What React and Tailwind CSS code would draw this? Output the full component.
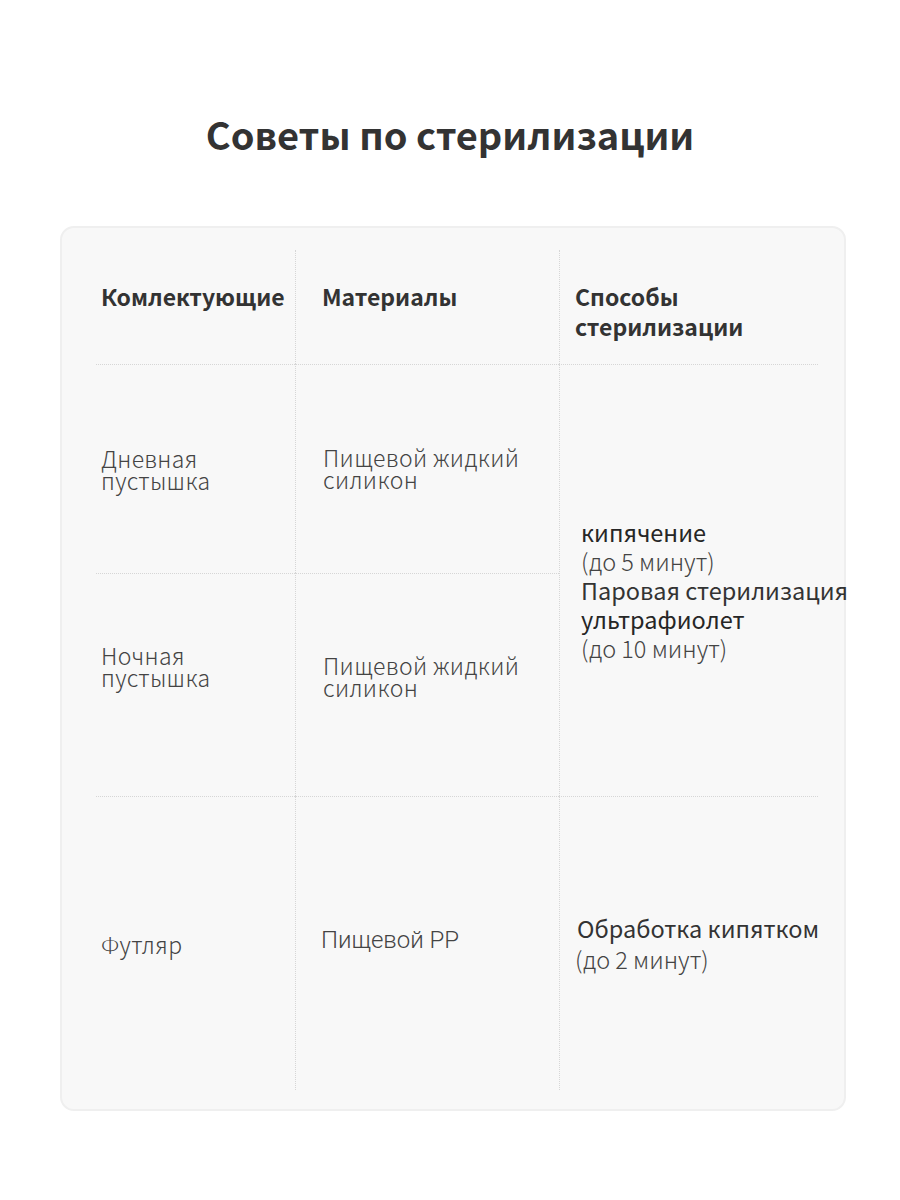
import React from "react";

const font = { fontFamily: '"Noto Sans CJK SC", "Noto Sans", sans-serif' };

const SterilizationTips = () => {
  return (
    <div className="w-[900px] min-h-[1200px] bg-white text-[#333]" style={font}>
      {/* Title */}
      <div className="pt-[106px] text-center">
        <h1 className="text-[38px] font-bold leading-[56px] text-[#333]">Советы по стерилизации</h1>
      </div>

      {/* Card */}
      <div className="mx-[60px] mt-[64px] w-[786px] h-[885px] rounded-[14px] border-2 border-[#efefef] bg-[#f8f8f8] pt-[22px] pl-[34px]">
        <div className="grid grid-cols-[199px_264px_259px] grid-rows-[114px_209px_223px_294px]">
          {/* Header */}
          <div className="pl-[5px] pt-[31px] text-[23px] font-bold leading-[30px] whitespace-nowrap">Комлектующие</div>
          <div className="border-l border-dotted border-[#d6d6d6] pl-[26px] pt-[31px] text-[23px] font-bold leading-[30px]">
            Материалы
          </div>
          <div className="border-l border-dotted border-[#d6d6d6] pl-[15px] pt-[31px] text-[23px] font-bold leading-[30px]">
            Способы
            <br />
            стерилизации
          </div>

          {/* Row 1 */}
          <div className="flex items-center border-t border-dotted border-[#d6d6d6] pl-[5px] text-[23px] font-light leading-[22px] tracking-[0.3px] text-[#444]">
            <span>
              Дневная
              <br />
              пустышка
            </span>
          </div>
          <div className="flex items-center border-l border-t border-dotted border-[#d6d6d6] pl-[27px] pb-[2px] text-[23px] font-light leading-[22px] tracking-[0.4px] text-[#444] whitespace-nowrap">
            <span>
              Пищевой жидкий
              <br />
              силикон
            </span>
          </div>
          <div className="row-span-2 flex items-center border-l border-t border-dotted border-[#d6d6d6] pl-[21px] pt-[20px] text-[23.5px] leading-[29px] whitespace-nowrap">
            <div>
              <div className="font-normal text-[#262626]">кипячение</div>
              <div className="font-light text-[#444]">(до 5 минут)</div>
              <div className="font-normal text-[#333]">Паровая стерилизация</div>
              <div className="font-normal text-[#262626]">ультрафиолет</div>
              <div className="font-light text-[#444]">(до 10 минут)</div>
            </div>
          </div>

          {/* Row 2 */}
          <div className="border-t border-dotted border-[#d6d6d6] pl-[5px] pt-[70px] text-[23px] font-light leading-[22px] tracking-[0.3px] text-[#444]">
            Ночная
            <br />
            пустышка
          </div>
          <div className="border-l border-t border-dotted border-[#d6d6d6] pl-[27px] pt-[80px] text-[23px] font-light leading-[22px] tracking-[0.4px] text-[#444] whitespace-nowrap">
            Пищевой жидкий
            <br />
            силикон
          </div>

          {/* Row 3 */}
          <div className="flex items-center border-t border-dotted border-[#d6d6d6] pl-[5px] text-[23px] font-light leading-[22px] tracking-[0.3px] text-[#444]">
            Футляр
          </div>
          <div
            className="flex items-center border-l border-t border-dotted border-[#d6d6d6] pl-[25px] pb-[8px] text-[24px] font-light leading-[22px] text-[#444]"
            style={{ fontFamily: 'Roboto, "Noto Sans", sans-serif' }}
          >
            Пищевой PP
          </div>
          <div className="flex items-center border-l border-t border-dotted border-[#d6d6d6] pl-[15px] text-[23.5px] leading-[31px] whitespace-nowrap">
            <div>
              <div className="pl-[2px] font-normal text-[#333]">Обработка кипятком</div>
              <div className="font-light text-[#444]">(до 2 минут)</div>
            </div>
          </div>
        </div>
      </div>
    </div>
  );
};

export default function App() {
  return <SterilizationTips />;
}
